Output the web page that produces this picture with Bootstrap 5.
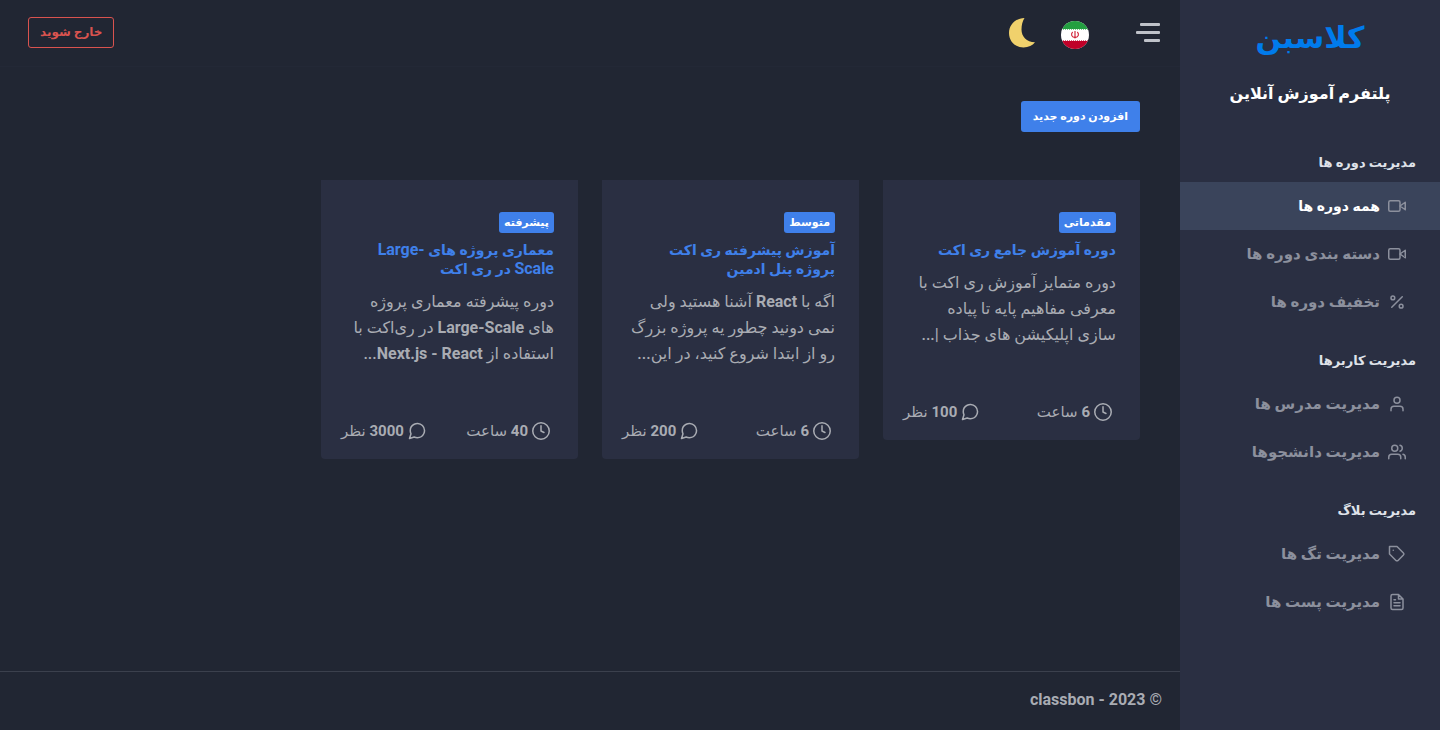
<!DOCTYPE html>
<html lang="fa" dir="rtl" data-bs-theme="dark">
<head>
<meta charset="utf-8">
<meta name="viewport" content="width=device-width, initial-scale=1">
<title>کلاسبن</title>
<link href="https://cdn.jsdelivr.net/npm/bootstrap@5.3.0/dist/css/bootstrap.min.css" rel="stylesheet">
<style>
  :root { --panel: #2a2f42; --page: #212633; --accent: #3f80ea; --muted: #a9acb3; }
  body { background: var(--page); color: var(--muted); font: 700 14px/24px Roboto, "DejaVu Sans", sans-serif; }
  a { text-decoration: none; }
  .latin { font-size: 16px; line-height: 1; font-weight: 700; }
  .sidebar { width: 260px; background: var(--panel); }
  .brand { height: 76px; color: #007bec; font-size: 30px; }
  .brand:hover { color: #007bec; }
  .slogan { font-size: 16px; line-height: 36px; }
  .side-title { font-size: 13px; line-height: 22px; padding: 24px 24px 8px; color: #dfe2e9; }
  .side-link { height: 48px; padding: 0 34px; gap: 8px; color: #8c909d; font-size: 15px; }
  .side-link:hover { color: #fff; }
  .side-link.active { background: #3a445b; color: #fff; font-size: 14px; }
  .side-link svg { color: #8c909d; }
  .ico { width: 18px; height: 18px; fill: none; stroke: currentColor; stroke-width: 2; stroke-linecap: round; stroke-linejoin: round; flex: none; }
  .topbar { height: 66px; padding: 0 20px 2px 28px; box-shadow: 0 1px 0 #232836; }
  .lang-btn { margin: 0 47px 0 26px; }
  .btn-sm { font-size: 12px; line-height: 21px; padding: 4px 11px; border-radius: 3px; font-weight: 700; }
  .btn-accent { background: var(--accent); color: #fff; font-size: 11px; }
  .btn-exit { color: #d9534f; border-color: #d9534f; }
  .content-area { padding: 35px 40px; }
  .course { background: var(--panel); border: 0; border-radius: 0 0 4px 4px; padding-top: 28px; }
  .course-head { padding: 4px 24px 0; }
  .level { background: var(--accent); font-size: 11px; line-height: 13px; padding: 4px 5px; border-radius: 3px; display: table; }
  .course-title { font-size: 14px; line-height: 19px; font-weight: 700; color: var(--accent); margin: 8px 0 10px; }
  .course-text { font-size: 16px; line-height: 26px; font-weight: 500; margin: 0; }
  .course-meta { padding: 52px 28px 16px 20px; font-size: 15px; font-weight: 500; }
  .course-meta .latin { font-size: 15px; }
  .foot { height: 59px; border-top: 1px solid #3b404d; padding: 0 18px 2px; }
</style>
</head>
<body>
<div class="d-flex min-vh-100">
  <nav class="sidebar flex-shrink-0">
    <a href="#" class="brand d-flex justify-content-center align-items-center">کلاسبن</a>
    <div class="slogan text-white text-center mb-3">پلتفرم آموزش آنلاین</div>
    <div class="side-title">مدیریت دوره ها</div>
    <a href="#" class="side-link active d-flex align-items-center"><svg class="ico" viewBox="0 0 24 24"><path d="M23 7l-7 5 7 5V7z"/><rect x="1" y="5" width="15" height="14" rx="2"/></svg>همه دوره ها</a>
    <a href="#" class="side-link d-flex align-items-center"><svg class="ico" viewBox="0 0 24 24"><path d="M23 7l-7 5 7 5V7z"/><rect x="1" y="5" width="15" height="14" rx="2"/></svg>دسته بندی دوره ها</a>
    <a href="#" class="side-link d-flex align-items-center"><svg class="ico" viewBox="0 0 24 24"><path d="M19 5L5 19"/><circle cx="6.500" cy="6.500" r="2.500"/><circle cx="17.500" cy="17.500" r="2.500"/></svg>تخفیف دوره ها</a>
    <div class="side-title">مدیریت کاربرها</div>
    <a href="#" class="side-link d-flex align-items-center"><svg class="ico" viewBox="0 0 24 24"><path d="M20 21v-2a4 4 0 0 0-4-4H8a4 4 0 0 0-4 4v2"/><circle cx="12" cy="7" r="4"/></svg>مدیریت مدرس ها</a>
    <a href="#" class="side-link d-flex align-items-center"><svg class="ico" viewBox="0 0 24 24"><path d="M17 21v-2a4 4 0 0 0-4-4H5a4 4 0 0 0-4 4v2"/><circle cx="9" cy="7" r="4"/><path d="M23 21v-2a4 4 0 0 0-3-3.870M16 3.130a4 4 0 0 1 0 7.750"/></svg>مدیریت دانشجوها</a>
    <div class="side-title">مدیریت بلاگ</div>
    <a href="#" class="side-link d-flex align-items-center"><svg class="ico" viewBox="0 0 24 24"><path d="M20.590 13.410l-7.170 7.170a2 2 0 0 1-2.830 0L2 12V2h10l8.590 8.590a2 2 0 0 1 0 2.820zM7 7h.01"/></svg>مدیریت تگ ها</a>
    <a href="#" class="side-link d-flex align-items-center"><svg class="ico" viewBox="0 0 24 24"><path d="M14 2H6a2 2 0 0 0-2 2v16a2 2 0 0 0 2 2h12a2 2 0 0 0 2-2V8zM14 2v6h6M16 13H8M16 17H8M10 9H8"/></svg>مدیریت پست ها</a>
  </nav>

  <div class="d-flex flex-column flex-grow-1">
    <header class="topbar d-flex align-items-center">
      <button type="button" class="btn p-0 border-0 d-flex" aria-label="منو">
        <svg width="24" height="19" viewBox="0 0 24 19" fill="#bfc2c9"><rect x="4" y="0" width="20" height="3" rx="1"/><rect x="0" y="8" width="24" height="3" rx="1"/><rect x="8" y="16" width="16" height="3" rx="1"/></svg>
      </button>
      <button type="button" class="lang-btn btn p-0 border-0 d-flex" aria-label="فارسی">
        <svg width="28" height="34" viewBox="0 -6 28 34"><defs><clipPath id="disc"><circle cx="14" cy="14" r="14"/></clipPath></defs><g clip-path="url(#disc)"><path fill="#fff" d="M0 0h28v28H0z"/><path fill="#239f40" d="M0 0h28v8H0z"/><path fill="#c00028" d="M0 20h28v8H0z"/><path stroke="#239f40" stroke-dasharray="1 1" d="M0 8.500h28" opacity=".6"/><path stroke="#c00028" stroke-dasharray="1 1" d="M0 19.500h28" opacity=".6"/><path d="M14 10v7.500M11.700 11c-2 2-1.500 5.200 2.300 5.700M16.300 11c2 2 1.500 5.200-2.300 5.700" fill="none" stroke="#d32a40" stroke-width="1.200"/></g></svg>
      </button>
      <button type="button" class="btn p-0 border-0 d-flex" aria-label="حالت شب">
        <svg width="26" height="32" viewBox="0 -2 26 32"><path fill="#f0d16c" d="M15.500 0C7 0 0 6.500 0 15s6.500 14.500 14.500 14.500c5 0 9-2 11.500-5.200C17.500 24 12.500 18.500 12.500 11.500c0-4.500 1-8.500 3-11.500z"/></svg>
      </button>
      <span class="flex-grow-1"></span>
      <button type="button" class="btn btn-sm btn-exit">خارج شوید</button>
    </header>

    <main class="content-area flex-grow-1">
      <a href="#" class="btn btn-sm btn-accent mb-5">افزودن دوره جدید</a>
      <div class="row align-items-start">
        <div class="col-3">
          <article class="course card">
            <div class="course-head">
              <span class="level badge">مقدماتی</span>
              <h5 class="course-title">دوره آموزش جامع ری اکت</h5>
              <p class="course-text">دوره متمایز آموزش ری اکت با<br>معرفی مفاهیم پایه تا پیاده<br>سازی اپلیکیشن های جذاب |...</p>
            </div>
            <div class="course-meta d-flex justify-content-between">
              <span class="d-flex align-items-center gap-1"><svg class="ico" viewBox="0 0 24 24"><circle cx="12" cy="12" r="11"/><path d="M12 5v7l4 2"/></svg><span><span class="latin">6</span> ساعت</span></span>
              <span class="d-flex align-items-center gap-1"><svg class="ico" viewBox="0 0 24 24"><path d="M22 11.500a9.380 9.380 0 0 1-1 4.200 9.500 9.500 0 0 1-8.500 5.300 9.380 9.380 0 0 1-4.200-1L2 22l2-6.300a9.380 9.380 0 0 1-1-4.200 9.500 9.500 0 0 1 5.300-8.500 9.380 9.380 0 0 1 4.200-1h.5a9.480 9.480 0 0 1 9 9v.5z"/></svg><span><span class="latin">100</span> نظر</span></span>
            </div>
          </article>
        </div>
        <div class="col-3">
          <article class="course card">
            <div class="course-head">
              <span class="level badge">متوسط</span>
              <h5 class="course-title">آموزش پیشرفته ری اکت<br>پروژه پنل ادمین</h5>
              <p class="course-text">اگه با <span class="latin">React</span> آشنا هستید ولی<br>نمی دونید چطور یه پروژه بزرگ<br>رو از ابتدا شروع کنید، در این...</p>
            </div>
            <div class="course-meta d-flex justify-content-between">
              <span class="d-flex align-items-center gap-1"><svg class="ico" viewBox="0 0 24 24"><circle cx="12" cy="12" r="11"/><path d="M12 5v7l4 2"/></svg><span><span class="latin">6</span> ساعت</span></span>
              <span class="d-flex align-items-center gap-1"><svg class="ico" viewBox="0 0 24 24"><path d="M22 11.500a9.380 9.380 0 0 1-1 4.200 9.500 9.500 0 0 1-8.500 5.300 9.380 9.380 0 0 1-4.200-1L2 22l2-6.300a9.380 9.380 0 0 1-1-4.200 9.500 9.500 0 0 1 5.300-8.500 9.380 9.380 0 0 1 4.200-1h.5a9.480 9.480 0 0 1 9 9v.5z"/></svg><span><span class="latin">200</span> نظر</span></span>
            </div>
          </article>
        </div>
        <div class="col-3">
          <article class="course card">
            <div class="course-head">
              <span class="level badge">پیشرفته</span>
              <h5 class="course-title">معماری پروژه های <bdi class="latin">Large-</bdi><br><span class="latin">Scale</span> در ری اکت</h5>
              <p class="course-text">دوره پیشرفته معماری پروژه<br>های <span class="latin">Large-Scale</span> در ری‌اکت با<br>استفاده از <bdi class="latin" dir="ltr">Next.js - React</bdi>...</p>
            </div>
            <div class="course-meta d-flex justify-content-between">
              <span class="d-flex align-items-center gap-1"><svg class="ico" viewBox="0 0 24 24"><circle cx="12" cy="12" r="11"/><path d="M12 5v7l4 2"/></svg><span><span class="latin">40</span> ساعت</span></span>
              <span class="d-flex align-items-center gap-1"><svg class="ico" viewBox="0 0 24 24"><path d="M22 11.500a9.380 9.380 0 0 1-1 4.200 9.500 9.500 0 0 1-8.500 5.300 9.380 9.380 0 0 1-4.200-1L2 22l2-6.300a9.380 9.380 0 0 1-1-4.200 9.500 9.500 0 0 1 5.300-8.500 9.380 9.380 0 0 1 4.200-1h.5a9.480 9.480 0 0 1 9 9v.5z"/></svg><span><span class="latin">3000</span> نظر</span></span>
            </div>
          </article>
        </div>
      </div>
    </main>

    <footer class="foot d-flex align-items-center"><span class="latin">© <bdi dir="ltr">classbon - 2023</bdi></span></footer>
  </div>
</div>
<script src="https://cdn.jsdelivr.net/npm/bootstrap@5.3.0/dist/js/bootstrap.bundle.min.js"></script>
</body>
</html>
